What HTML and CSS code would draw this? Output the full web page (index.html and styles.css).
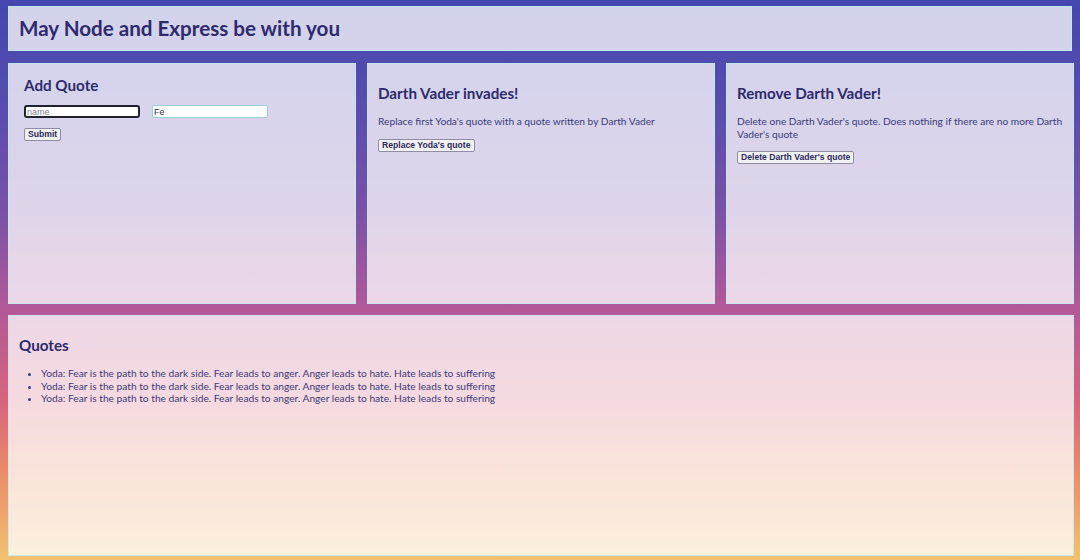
FILE: index.html
```html
<!DOCTYPE html>
<html lang="en">
<head>
<meta charset="utf-8">
<title>May Node and Express be with you</title>
<link rel="stylesheet" href="styles.css">
</head>
<body>
<div class="page">
  <header class="panel header">
    <h1>May Node and Express be with you</h1>
  </header>
  <div class="cards">
    <section class="panel card card-form">
      <h2>Add Quote</h2>
      <form class="quote-form">
        <div class="inputs">
          <input class="field field-focus" type="text" placeholder="name">
          <input class="field" type="text" value="Fe">
        </div>
        <button class="btn" type="button">Submit</button>
      </form>
    </section>
    <section class="panel card">
      <h2>Darth Vader invades!</h2>
      <p>Replace first Yoda's quote with a quote written by Darth Vader</p>
      <button class="btn" type="button">Replace Yoda's quote</button>
    </section>
    <section class="panel card">
      <h2>Remove Darth Vader!</h2>
      <p>Delete one Darth Vader's quote. Does nothing if there are no more Darth Vader's quote</p>
      <button class="btn" type="button">Delete Darth Vader's quote</button>
    </section>
  </div>
  <section class="panel quotes">
    <h2>Quotes</h2>
    <ul class="quote-list">
      <li>Yoda: Fear is the path to the dark side. Fear leads to anger. Anger leads to hate. Hate leads to suffering</li>
      <li>Yoda: Fear is the path to the dark side. Fear leads to anger. Anger leads to hate. Hate leads to suffering</li>
      <li>Yoda: Fear is the path to the dark side. Fear leads to anger. Anger leads to hate. Hate leads to suffering</li>
    </ul>
  </section>
</div>
</body>
</html>
```

FILE: styles.css
```css
html, body {
  margin: 0;
  padding: 0;
  height: 100%;
}

body {
  background: linear-gradient(to bottom,
    #4447b0 0%,
    #5a4dae 20%,
    #7a52a6 38%,
    #b0589a 54%,
    #d8647c 72%,
    #ea8a6a 84%,
    #f2c270 100%);
  font-family: Lato, "Open Sans", sans-serif;
  color: #332f6e;
}

.page {
  box-sizing: border-box;
  height: 560px;
  padding: 6px 6px 4px 8px;
  display: flex;
  flex-direction: column;
  gap: 11px;
}

.panel {
  box-sizing: border-box;
  background: rgba(255, 255, 255, 0.76);
  border: 1px solid rgba(190, 235, 235, 0.85);
}

.header {
  height: 45px;
  margin-right: 2px;
  padding: 0 10px;
  display: flex;
  align-items: center;
}

h1 {
  margin: 0 0 1px;
  font-size: 20.6px;
  font-weight: 700;
  color: #2e2a6c;
}

.cards {
  display: grid;
  grid-template-columns: 1fr 1fr 1fr;
  gap: 11px;
  height: 241px;
  margin-top: 1px;
}

.card {
  padding: 10px 10px;
}

h2 {
  margin: 9px 0 12px;
  font-size: 15.2px;
  font-weight: 700;
  color: #2e2a6c;
  line-height: 20px;
}

.card-form {
  padding: 10px 15px;
}

.card-form h2 {
  margin: 1px 0 10px;
}

p {
  margin: 0 0 4px;
  font-size: 10.2px;
  line-height: 12.5px;
  color: #3d3a7a;
}

.quote-form {
  display: flex;
  flex-direction: column;
  align-items: flex-start;
  gap: 10px;
}

.inputs {
  display: flex;
  gap: 12px;
}

.field {
  box-sizing: border-box;
  width: 116px;
  height: 13px;
  padding: 0 1px;
  font-family: "Liberation Sans", Arial, sans-serif;
  font-size: 9px;
  color: #3a3a4a;
  background: #ffffff;
  border: 1px solid #9fcfd6;
  border-radius: 2px;
  outline: none;
}

.field::placeholder {
  color: #8a8a92;
}

.field-focus {
  border: 2px solid #222233;
  border-radius: 3px;
}

.btn {
  box-sizing: border-box;
  height: 13px;
  padding: 0 3px;
  font-family: "Liberation Sans", Arial, sans-serif;
  font-size: 8.65px;
  font-weight: 700;
  color: #2e2a5c;
  line-height: 11px;
  background: #f1f1f4;
  border: 1px solid #8e8ea0;
  border-radius: 2px;
}

.quotes {
  flex: 1;
  padding: 10px 10px;
}

.quotes h2 {
  margin: 9px 0 12px;
}

.quote-list {
  margin: 0;
  padding-left: 22px;
  font-size: 10.2px;
  line-height: 12.5px;
  color: #3d3a7a;
}
```
